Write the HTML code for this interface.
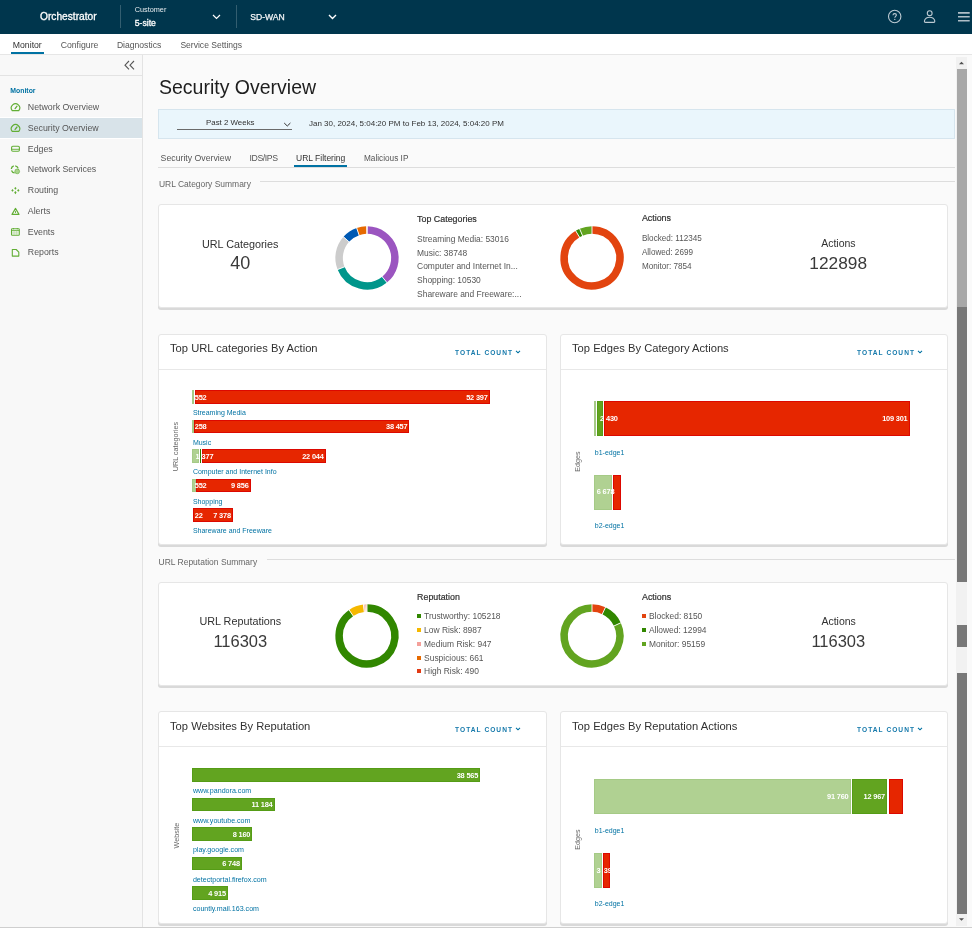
<!DOCTYPE html>
<html><head><meta charset="utf-8"><title>Security Overview</title>
<style>
html,body{margin:0;padding:0;}
body{width:972px;height:928px;position:relative;overflow:hidden;background:#fafafa;font-family:"Liberation Sans", sans-serif;}
.t{position:absolute;white-space:nowrap;}
.r{position:absolute;}
.s{position:absolute;overflow:visible;}
</style></head><body>
<div style="position:absolute;left:0;top:0;width:972px;height:928px;will-change:transform;background:#fafafa">

<div class="r" style="left:0px;top:0px;width:972px;height:34px;background:#00364d;"></div>
<div class="t" style="left:40.00px;top:11px;font-size:10.2px;line-height:11px;color:#ffffff;font-weight:normal;-webkit-text-stroke:0.3px #fff;">Orchestrator</div>
<div class="r" style="left:120px;top:5px;width:1px;height:23px;background:rgba(255,255,255,0.2);"></div>
<div class="t" style="left:134.70px;top:5px;font-size:7.3px;line-height:9px;color:#e6ecef;font-weight:normal;">Customer</div>
<div class="t" style="left:134.70px;top:18px;font-size:8.7px;line-height:10px;color:#ffffff;font-weight:normal;-webkit-text-stroke:0.3px #fff;">5-site</div>
<svg class="s" style="left:212px;top:14px;" width="9" height="6" viewBox="0 0 9 6"><polyline points="1,1 4.5,4.5 8,1" stroke="#fff" stroke-width="1.2" fill="none"/></svg>
<div class="r" style="left:236px;top:5px;width:1px;height:23px;background:rgba(255,255,255,0.2);"></div>
<div class="t" style="left:250.20px;top:12px;font-size:8.6px;line-height:10px;color:#f4f6f8;font-weight:normal;-webkit-text-stroke:0.25px #f4f6f8;">SD-WAN</div>
<svg class="s" style="left:327.5px;top:14px;" width="9" height="6" viewBox="0 0 9 6"><polyline points="1,1 4.5,4.5 8,1" stroke="#fff" stroke-width="1.4" fill="none"/></svg>
<svg class="s" style="left:886px;top:8.3px;" width="18" height="18" viewBox="0 0 18 18"><circle cx="8.7" cy="8.5" r="6.2" stroke="#bccad2" stroke-width="1.1" fill="none"/><path d="M7,7.3 C7,6.2 7.8,5.6 8.7,5.6 C9.7,5.6 10.4,6.3 10.4,7.1 C10.4,8.2 8.8,8.5 8.8,9.8" stroke="#bccad2" stroke-width="1.1" fill="none"/><circle cx="8.8" cy="11.4" r="0.65" fill="#bccad2"/></svg>
<svg class="s" style="left:920px;top:7px;" width="18" height="18" viewBox="0 0 18 18"><circle cx="9.7" cy="6.2" r="2.4" stroke="#bccad2" stroke-width="1.1" fill="none"/><path d="M5.6,15.4 C4.3,15.4 4.3,14.3 4.6,13.3 C5.4,11.2 7.3,10.3 9.6,10.3 C11.9,10.3 13.8,11.2 14.6,13.3 C14.9,14.3 14.9,15.4 13.6,15.4 Z" stroke="#bccad2" stroke-width="1.1" fill="none" stroke-linejoin="round"/></svg>
<svg class="s" style="left:957px;top:10px;" width="15" height="14" viewBox="0 0 15 14"><path d="M1,2.9 H12.7 M1,6.8 H12.7 M1,10.7 H12.7" stroke="#afbec7" stroke-width="1.6"/></svg>
<div class="r" style="left:0px;top:34px;width:972px;height:20px;background:#ffffff;"></div>
<div class="r" style="left:0px;top:54px;width:972px;height:1px;background:#e6e6e6;"></div>
<div class="t" style="left:12.80px;top:40px;font-size:8.7px;line-height:10px;color:#313131;font-weight:normal;">Monitor</div>
<div class="r" style="left:11px;top:52px;width:33px;height:2px;background:#0072a3;"></div>
<div class="t" style="left:60.70px;top:40px;font-size:8.7px;line-height:10px;color:#565656;font-weight:normal;">Configure</div>
<div class="t" style="left:116.90px;top:40px;font-size:8.6px;line-height:10px;color:#565656;font-weight:normal;">Diagnostics</div>
<div class="t" style="left:180.40px;top:40px;font-size:8.55px;line-height:10px;color:#565656;font-weight:normal;">Service Settings</div>
<div class="r" style="left:0px;top:55px;width:142px;height:873px;background:#f8f8f8;"></div>
<div class="r" style="left:142px;top:55px;width:1px;height:873px;background:#e3e3e3;"></div>
<div class="r" style="left:0px;top:75px;width:142px;height:1px;background:#e3e3e3;"></div>
<svg class="s" style="left:124px;top:60px;" width="12" height="11" viewBox="0 0 12 11"><polyline points="5,1 1,5.2 5,9.4" stroke="#565656" stroke-width="1.1" fill="none"/><polyline points="10,1 6,5.2 10,9.4" stroke="#565656" stroke-width="1.1" fill="none"/></svg>
<div class="t" style="left:10.30px;top:87px;font-size:6.9px;line-height:7px;color:#0072a3;font-weight:bold;">Monitor</div>
<div class="r" style="left:0px;top:117px;width:142px;height:1px;background:#ffffff;"></div>
<div class="r" style="left:0px;top:118px;width:142px;height:20px;background:#d8e3e9;"></div>
<div class="r" style="left:0px;top:138px;width:142px;height:1px;background:#ffffff;"></div>
<svg class="s" style="left:0;top:0" width="30" height="260" viewBox="0 0 30 260"><path d="M12.2,110.6 A4.2,4.2 0 1 1 18.8,110.6 Z" stroke="#62ae35" stroke-width="1.15" fill="none" stroke-linejoin="round"/><path d="M15.1,108.6 L17,106.2" stroke="#62ae35" stroke-width="1.3" stroke-linecap="round"/><path d="M12.2,131.4 A4.2,4.2 0 1 1 18.8,131.4 Z" stroke="#62ae35" stroke-width="1.15" fill="none" stroke-linejoin="round"/><path d="M15.1,129.4 L17,127" stroke="#62ae35" stroke-width="1.3" stroke-linecap="round"/><rect x="11.6" y="146.3" width="7.8" height="5" rx="1.2" stroke="#62ae35" stroke-width="1.1" fill="none"/><path d="M11.8,149.3 H19.2" stroke="#62ae35" stroke-width="0.9"/><circle cx="14.8" cy="169.3" r="3.5" stroke="#62ae35" stroke-width="1.3" fill="none" stroke-dasharray="4 1.5"/><circle cx="17.2" cy="171.4" r="2.4" fill="#a9d38c" stroke="#62ae35" stroke-width="0.6"/><path d="M15.4,186.9 L16.6,188.3 L15.4,189.7 L14.2,188.3 Z M12.5,189 L13.7,190.4 L12.5,191.8 L11.3,190.4 Z M18.3,189 L19.5,190.4 L18.3,191.8 L17.1,190.4 Z M15.4,191.1 L16.6,192.5 L15.4,194.2 L14.2,192.5 Z" fill="#62ae35"/><path d="M15.5,208.4 L19,214.4 H12 Z" stroke="#62ae35" stroke-width="1.1" fill="none" stroke-linejoin="round"/><path d="M15.5,210.8 V213" stroke="#62ae35" stroke-width="0.9"/><rect x="11.5" y="228.8" width="7.8" height="6.5" rx="0.8" stroke="#62ae35" stroke-width="1.05" fill="none"/><path d="M11.5,230.6 H19.3 M13.5,228 V229.3 M17.3,228 V229.3" stroke="#62ae35" stroke-width="0.9"/><path d="M12,232.3 H18.8 M12,233.8 H18.8 M14.1,230.8 V235 M16.6,230.8 V235" stroke="#b5d99c" stroke-width="0.6"/><path d="M12.3,249.5 H16.2 L18.8,252.1 V256.1 H12.3 Z" stroke="#62ae35" stroke-width="1.1" fill="none" stroke-linejoin="round"/></svg>
<div class="t" style="left:27.80px;top:102px;font-size:8.8px;line-height:10px;color:#565656;font-weight:normal;">Network Overview</div>
<div class="t" style="left:27.80px;top:123px;font-size:8.8px;line-height:10px;color:#565656;font-weight:normal;">Security Overview</div>
<div class="t" style="left:27.80px;top:144px;font-size:8.8px;line-height:10px;color:#565656;font-weight:normal;">Edges</div>
<div class="t" style="left:27.80px;top:164px;font-size:8.8px;line-height:10px;color:#565656;font-weight:normal;">Network Services</div>
<div class="t" style="left:27.80px;top:185px;font-size:8.8px;line-height:10px;color:#565656;font-weight:normal;">Routing</div>
<div class="t" style="left:27.80px;top:206px;font-size:8.8px;line-height:10px;color:#565656;font-weight:normal;">Alerts</div>
<div class="t" style="left:27.80px;top:227px;font-size:8.8px;line-height:10px;color:#565656;font-weight:normal;">Events</div>
<div class="t" style="left:27.80px;top:247px;font-size:8.8px;line-height:10px;color:#565656;font-weight:normal;">Reports</div>
<div class="t" style="left:159.00px;top:76px;font-size:19.5px;line-height:22px;color:#1e1e1e;font-weight:normal;">Security Overview</div>
<div class="r" style="left:158px;top:109px;width:795px;height:28px;background:#eaf6fc;border:1px solid #d6e5ee;"></div>
<div class="r" style="left:177px;top:129px;width:115px;height:1px;background:#6a6a6a;"></div>
<div class="t" style="left:206.00px;top:118px;font-size:7.9px;line-height:9px;color:#313131;font-weight:normal;">Past 2 Weeks</div>
<svg class="s" style="left:283px;top:122px;" width="9" height="6" viewBox="0 0 9 6"><polyline points="1.2,1 4.3,4 7.4,1" stroke="#313131" stroke-width="1" fill="none"/></svg>
<div class="t" style="left:309.00px;top:119px;font-size:7.99px;line-height:9px;color:#313131;font-weight:normal;">Jan 30, 2024, 5:04:20 PM to Feb 13, 2024, 5:04:20 PM</div>
<div class="t" style="left:160.60px;top:153px;font-size:8.74px;line-height:10px;color:#565656;font-weight:normal;">Security Overview</div>
<div class="t" style="left:249.50px;top:153px;font-size:8.7px;line-height:10px;color:#565656;font-weight:normal;letter-spacing:-0.4px;">IDS/IPS</div>
<div class="t" style="left:296.00px;top:153px;font-size:8.5px;line-height:10px;color:#313131;font-weight:normal;">URL Filtering</div>
<div class="t" style="left:364.00px;top:154px;font-size:8.24px;line-height:9px;color:#565656;font-weight:normal;">Malicious IP</div>
<div class="r" style="left:158px;top:167px;width:797px;height:1px;background:#dddddd;"></div>
<div class="r" style="left:294px;top:165px;width:53px;height:2px;background:#0072a3;"></div>
<div class="t" style="left:159.00px;top:179px;font-size:8.48px;line-height:10px;color:#666666;font-weight:normal;">URL Category Summary</div>
<div class="r" style="left:260px;top:181px;width:695px;height:1px;background:#dddddd;"></div>
<div class="r" style="left:158px;top:204px;width:788px;height:102px;background:#fff;border:1px solid #e6e6e6;border-radius:3px;box-shadow:0 2px 0 0 #d9d9d9;"></div>
<div class="t" style="left:-59.80px;width:600px;text-align:center;top:238px;font-size:10.8px;line-height:12px;color:#313131;font-weight:normal;">URL Categories</div>
<div class="t" style="left:-59.70px;width:600px;text-align:center;top:253px;font-size:18px;line-height:20px;color:#3a3a3a;font-weight:normal;">40</div>
<svg class="s" style="left:332.45px;top:222.7px;" width="70" height="70" viewBox="0 0 70 70"><path d="M35.243,7.101 A27.9,27.9 0 0 1 52.558,56.682" stroke="#9b55c0" stroke-width="7.5" fill="none"/><path d="M52.558,56.682 A27.9,27.9 0 0 1 9.041,45.225" stroke="#00968b" stroke-width="7.5" fill="none"/><path d="M9.041,45.225 A27.9,27.9 0 0 1 14.266,16.331" stroke="#cccccc" stroke-width="7.5" fill="none"/><path d="M14.266,16.331 A27.9,27.9 0 0 1 25.917,8.620" stroke="#0059b3" stroke-width="7.5" fill="none"/><path d="M25.917,8.620 A27.9,27.9 0 0 1 34.270,7.110" stroke="#e66a00" stroke-width="7.5" fill="none"/><line x1="35.202" y1="11.851" x2="35.285" y2="2.351" stroke="#fff" stroke-width="0.9"/><line x1="49.569" y1="52.991" x2="55.547" y2="60.374" stroke="#fff" stroke-width="0.9"/><line x1="13.461" y1="43.485" x2="4.622" y2="46.966" stroke="#fff" stroke-width="0.9"/><line x1="17.796" y1="19.510" x2="10.736" y2="13.153" stroke="#fff" stroke-width="0.9"/><line x1="27.463" y1="13.111" x2="24.370" y2="4.129" stroke="#fff" stroke-width="0.9"/></svg>
<div class="t" style="left:417.10px;top:214px;font-size:8.9px;line-height:10px;color:#313131;font-weight:normal;-webkit-text-stroke:0.2px #313131;">Top Categories</div>
<div class="t" style="left:417.10px;top:234px;font-size:8.44px;line-height:10px;color:#565656;font-weight:normal;">Streaming Media: 53016</div>
<div class="t" style="left:417.10px;top:248px;font-size:8.44px;line-height:10px;color:#565656;font-weight:normal;">Music: 38748</div>
<div class="t" style="left:417.10px;top:261px;font-size:8.44px;line-height:10px;color:#565656;font-weight:normal;">Computer and Internet In...</div>
<div class="t" style="left:417.10px;top:275px;font-size:8.44px;line-height:10px;color:#565656;font-weight:normal;">Shopping: 10530</div>
<div class="t" style="left:417.10px;top:289px;font-size:8.44px;line-height:10px;color:#565656;font-weight:normal;">Shareware and Freeware:...</div>
<svg class="s" style="left:557.3px;top:222.8px;" width="70" height="70" viewBox="0 0 70 70"><path d="M35.000,7.100 A27.9,27.9 0 1 1 20.630,11.085" stroke="#e2440f" stroke-width="7.5" fill="none"/><path d="M20.630,11.085 A27.9,27.9 0 0 1 24.099,9.318" stroke="#318700" stroke-width="7.5" fill="none"/><path d="M24.099,9.318 A27.9,27.9 0 0 1 35.000,7.100" stroke="#62a420" stroke-width="7.5" fill="none"/><line x1="35.000" y1="11.850" x2="35.000" y2="2.350" stroke="#fff" stroke-width="0.9"/><line x1="23.077" y1="15.157" x2="18.184" y2="7.013" stroke="#fff" stroke-width="0.9"/><line x1="25.955" y1="13.690" x2="22.243" y2="4.946" stroke="#fff" stroke-width="0.9"/></svg>
<div class="t" style="left:641.90px;top:213px;font-size:8.9px;line-height:10px;color:#313131;font-weight:normal;-webkit-text-stroke:0.2px #313131;">Actions</div>
<div class="t" style="left:641.90px;top:234px;font-size:8.14px;line-height:9px;color:#565656;font-weight:normal;">Blocked: 112345</div>
<div class="t" style="left:641.90px;top:248px;font-size:8.14px;line-height:9px;color:#565656;font-weight:normal;">Allowed: 2699</div>
<div class="t" style="left:641.90px;top:262px;font-size:8.14px;line-height:9px;color:#565656;font-weight:normal;">Monitor: 7854</div>
<div class="t" style="left:538.40px;width:600px;text-align:center;top:237px;font-size:10.5px;line-height:12px;color:#313131;font-weight:normal;">Actions</div>
<div class="t" style="left:538.20px;width:600px;text-align:center;top:253px;font-size:17.3px;line-height:20px;color:#3a3a3a;font-weight:normal;">122898</div>
<div class="t" style="left:158.60px;top:557px;font-size:8.48px;line-height:10px;color:#666666;font-weight:normal;">URL Reputation Summary</div>
<div class="r" style="left:267px;top:559px;width:688px;height:1px;background:#dddddd;"></div>
<div class="r" style="left:158px;top:582px;width:788px;height:102px;background:#fff;border:1px solid #e6e6e6;border-radius:3px;box-shadow:0 2px 0 0 #d9d9d9;"></div>
<div class="t" style="left:-59.70px;width:600px;text-align:center;top:615px;font-size:10.8px;line-height:12px;color:#313131;font-weight:normal;">URL Reputations</div>
<div class="t" style="left:-59.70px;width:600px;text-align:center;top:632px;font-size:16.5px;line-height:18px;color:#3a3a3a;font-weight:normal;">116303</div>
<svg class="s" style="left:332.2px;top:600.6px;" width="70" height="70" viewBox="0 0 70 70"><path d="M35.000,7.100 A27.9,27.9 0 1 1 19.197,12.007" stroke="#318700" stroke-width="7.5" fill="none"/><path d="M19.197,12.007 A27.9,27.9 0 0 1 31.842,7.279" stroke="#f5b800" stroke-width="7.5" fill="none"/><path d="M31.842,7.279 A27.9,27.9 0 0 1 33.248,7.155" stroke="#f4a09a" stroke-width="7.5" fill="none"/><path d="M33.248,7.155 A27.9,27.9 0 0 1 34.270,7.110" stroke="#e66a00" stroke-width="7.5" fill="none"/><path d="M34.270,7.110 A27.9,27.9 0 0 1 35.000,7.100" stroke="#e23a14" stroke-width="7.5" fill="none"/><line x1="35.000" y1="11.850" x2="35.000" y2="2.350" stroke="#fff" stroke-width="0.9"/><line x1="21.888" y1="15.921" x2="16.507" y2="8.092" stroke="#fff" stroke-width="0.9"/><line x1="32.379" y1="11.999" x2="31.304" y2="2.560" stroke="#fff" stroke-width="0.9"/><line x1="33.546" y1="11.896" x2="32.950" y2="2.414" stroke="#fff" stroke-width="0.9"/><line x1="34.394" y1="11.858" x2="34.145" y2="2.361" stroke="#fff" stroke-width="0.9"/></svg>
<div class="t" style="left:417.10px;top:592px;font-size:8.83px;line-height:10px;color:#313131;font-weight:normal;-webkit-text-stroke:0.2px #313131;">Reputation</div>
<div class="r" style="left:417px;top:614px;width:4px;height:4px;background:#318700;"></div>
<div class="t" style="left:424.10px;top:611px;font-size:8.44px;line-height:10px;color:#565656;font-weight:normal;">Trustworthy: 105218</div>
<div class="r" style="left:417px;top:628px;width:4px;height:4px;background:#f5b800;"></div>
<div class="t" style="left:424.10px;top:625px;font-size:8.44px;line-height:10px;color:#565656;font-weight:normal;">Low Risk: 8987</div>
<div class="r" style="left:417px;top:642px;width:4px;height:4px;background:#f4a09a;"></div>
<div class="t" style="left:424.10px;top:639px;font-size:8.44px;line-height:10px;color:#565656;font-weight:normal;">Medium Risk: 947</div>
<div class="r" style="left:417px;top:656px;width:4px;height:4px;background:#e66a00;"></div>
<div class="t" style="left:424.10px;top:653px;font-size:8.44px;line-height:10px;color:#565656;font-weight:normal;">Suspicious: 661</div>
<div class="r" style="left:417px;top:669px;width:4px;height:4px;background:#e23a14;"></div>
<div class="t" style="left:424.10px;top:666px;font-size:8.44px;line-height:10px;color:#565656;font-weight:normal;">High Risk: 490</div>
<svg class="s" style="left:557.45px;top:600.75px;" width="70" height="70" viewBox="0 0 70 70"><path d="M35.000,7.100 A27.9,27.9 0 0 1 46.879,9.755" stroke="#e2440f" stroke-width="7.5" fill="none"/><path d="M46.879,9.755 A27.9,27.9 0 0 1 60.368,23.386" stroke="#318700" stroke-width="7.5" fill="none"/><path d="M60.368,23.386 A27.9,27.9 0 1 1 35.000,7.100" stroke="#62a420" stroke-width="7.5" fill="none"/><line x1="35.000" y1="11.850" x2="35.000" y2="2.350" stroke="#fff" stroke-width="0.9"/><line x1="44.857" y1="14.053" x2="48.902" y2="5.457" stroke="#fff" stroke-width="0.9"/><line x1="56.049" y1="25.363" x2="64.687" y2="21.408" stroke="#fff" stroke-width="0.9"/></svg>
<div class="t" style="left:642.00px;top:592px;font-size:8.9px;line-height:10px;color:#313131;font-weight:normal;-webkit-text-stroke:0.2px #313131;">Actions</div>
<div class="r" style="left:642px;top:614px;width:4px;height:4px;background:#e2440f;"></div>
<div class="t" style="left:649.00px;top:611px;font-size:8.41px;line-height:10px;color:#565656;font-weight:normal;">Blocked: 8150</div>
<div class="r" style="left:642px;top:628px;width:4px;height:4px;background:#318700;"></div>
<div class="t" style="left:649.00px;top:625px;font-size:8.41px;line-height:10px;color:#565656;font-weight:normal;">Allowed: 12994</div>
<div class="r" style="left:642px;top:642px;width:4px;height:4px;background:#62a420;"></div>
<div class="t" style="left:649.00px;top:639px;font-size:8.41px;line-height:10px;color:#565656;font-weight:normal;">Monitor: 95159</div>
<div class="t" style="left:538.60px;width:600px;text-align:center;top:615px;font-size:10.5px;line-height:12px;color:#313131;font-weight:normal;">Actions</div>
<div class="t" style="left:538.30px;width:600px;text-align:center;top:632px;font-size:16.5px;line-height:18px;color:#3a3a3a;font-weight:normal;">116303</div>
<div class="r" style="left:158px;top:334px;width:387px;height:209px;background:#fff;border:1px solid #e6e6e6;border-radius:3px;box-shadow:0 2px 0 0 #d9d9d9;"></div>
<div class="r" style="left:159px;top:369px;width:387px;height:1px;background:#e8e8e8;"></div>
<div class="t" style="left:170.00px;top:342px;font-size:11.2px;line-height:12px;color:#313131;font-weight:normal;">Top URL categories By Action</div>
<div class="t" style="left:455.00px;top:349px;font-size:6.6px;line-height:7px;color:#1579ab;font-weight:bold;letter-spacing:1.05px;">TOTAL COUNT</div>
<svg class="s" style="left:514.5px;top:350.2px;" width="6" height="4" viewBox="0 0 6 4"><polyline points="1,0.8 3,2.8 5,0.8" stroke="#0072a3" stroke-width="1.1" fill="none"/></svg>
<div class="t" style="left:126px;top:443.2px;width:100px;text-align:center;font-size:7.2px;line-height:7.2px;color:#666666;transform:rotate(-90deg);">URL categories</div>
<div class="r" style="left:192.20px;top:390.30px;width:1.70px;height:13.6px;background:#b0d192;box-shadow:inset 0 0 0 1px #a5ca86;"></div>
<div class="r" style="left:194.90px;top:390.30px;width:294.70px;height:13.6px;background:#e62600;box-shadow:inset 0 0 0 1px #dc0800;"></div>
<div class="t" style="left:194.80px;top:393px;font-size:7.4px;line-height:9px;color:#ffffff;font-weight:bold;letter-spacing:-0.2px;">552</div>
<div class="t" style="right:484.40px;top:393px;font-size:7.4px;line-height:9px;color:#ffffff;font-weight:bold;letter-spacing:-0.2px;">52 397</div>
<div class="t" style="left:192.90px;top:409px;font-size:7px;line-height:7px;color:#0072a3;font-weight:normal;">Streaming Media</div>
<div class="r" style="left:192.20px;top:419.80px;width:1.40px;height:13.6px;background:#b0d192;box-shadow:inset 0 0 0 1px #a5ca86;"></div>
<div class="r" style="left:193.90px;top:419.80px;width:215.50px;height:13.6px;background:#e62600;box-shadow:inset 0 0 0 1px #dc0800;"></div>
<div class="t" style="left:194.80px;top:422px;font-size:7.4px;line-height:9px;color:#ffffff;font-weight:bold;letter-spacing:-0.2px;">258</div>
<div class="t" style="right:564.60px;top:422px;font-size:7.4px;line-height:9px;color:#ffffff;font-weight:bold;letter-spacing:-0.2px;">38 457</div>
<div class="t" style="left:192.90px;top:439px;font-size:7px;line-height:7px;color:#0072a3;font-weight:normal;">Music</div>
<div class="r" style="left:192.20px;top:449.20px;width:6.80px;height:13.6px;background:#b0d192;box-shadow:inset 0 0 0 1px #a5ca86;"></div>
<div class="r" style="left:199.70px;top:449.20px;width:1.60px;height:13.6px;background:#318700;box-shadow:inset 0 0 0 1px #2b7d00;"></div>
<div class="r" style="left:202.30px;top:449.20px;width:123.50px;height:13.6px;background:#e62600;box-shadow:inset 0 0 0 1px #dc0800;"></div>
<div class="t" style="left:195.60px;top:452px;font-size:7.4px;line-height:9px;color:#ffffff;font-weight:bold;letter-spacing:-0.2px;">1</div>
<div class="t" style="left:201.60px;top:452px;font-size:7.4px;line-height:9px;color:#ffffff;font-weight:bold;letter-spacing:-0.2px;">377</div>
<div class="t" style="right:648.40px;top:452px;font-size:7.4px;line-height:9px;color:#ffffff;font-weight:bold;letter-spacing:-0.2px;">22 044</div>
<div class="t" style="left:192.90px;top:468px;font-size:7px;line-height:7px;color:#0072a3;font-weight:normal;">Computer and Internet Info</div>
<div class="r" style="left:192.20px;top:478.90px;width:3.70px;height:13.6px;background:#b0d192;box-shadow:inset 0 0 0 1px #a5ca86;"></div>
<div class="r" style="left:196.00px;top:478.90px;width:54.70px;height:13.6px;background:#e62600;box-shadow:inset 0 0 0 1px #dc0800;"></div>
<div class="t" style="left:194.80px;top:481px;font-size:7.4px;line-height:9px;color:#ffffff;font-weight:bold;letter-spacing:-0.2px;">552</div>
<div class="t" style="right:723.40px;top:481px;font-size:7.4px;line-height:9px;color:#ffffff;font-weight:bold;letter-spacing:-0.2px;">9 856</div>
<div class="t" style="left:192.90px;top:498px;font-size:7px;line-height:7px;color:#0072a3;font-weight:normal;">Shopping</div>
<div class="r" style="left:192.60px;top:508.10px;width:40.40px;height:13.6px;background:#e62600;box-shadow:inset 0 0 0 1px #dc0800;"></div>
<div class="t" style="left:194.80px;top:511px;font-size:7.4px;line-height:9px;color:#ffffff;font-weight:bold;letter-spacing:-0.2px;">22</div>
<div class="t" style="right:741.20px;top:511px;font-size:7.4px;line-height:9px;color:#ffffff;font-weight:bold;letter-spacing:-0.2px;">7 378</div>
<div class="t" style="left:192.90px;top:527px;font-size:7px;line-height:7px;color:#0072a3;font-weight:normal;">Shareware and Freeware</div>
<div class="r" style="left:560px;top:334px;width:386px;height:209px;background:#fff;border:1px solid #e6e6e6;border-radius:3px;box-shadow:0 2px 0 0 #d9d9d9;"></div>
<div class="r" style="left:561px;top:369px;width:386px;height:1px;background:#e8e8e8;"></div>
<div class="t" style="left:572.00px;top:342px;font-size:11.2px;line-height:12px;color:#313131;font-weight:normal;">Top Edges By Category Actions</div>
<div class="t" style="left:857.00px;top:349px;font-size:6.6px;line-height:7px;color:#1579ab;font-weight:bold;letter-spacing:1.05px;">TOTAL COUNT</div>
<svg class="s" style="left:916.5px;top:350.2px;" width="6" height="4" viewBox="0 0 6 4"><polyline points="1,0.8 3,2.8 5,0.8" stroke="#0072a3" stroke-width="1.1" fill="none"/></svg>
<div class="t" style="left:528.2px;top:458.4px;width:100px;text-align:center;font-size:7.2px;line-height:7.2px;color:#666666;transform:rotate(-90deg);">Edges</div>
<div class="r" style="left:593.70px;top:401.3px;width:2.20px;height:34.7px;background:#b0d192;box-shadow:inset 0 0 0 1px #a5ca86;"></div>
<div class="r" style="left:597.10px;top:401.3px;width:6.30px;height:34.7px;background:#62a420;box-shadow:inset 0 0 0 1px #559c16;"></div>
<div class="r" style="left:604.10px;top:401.3px;width:306.40px;height:34.7px;background:#e62600;box-shadow:inset 0 0 0 1px #dc0800;"></div>
<div class="t" style="left:600.00px;top:414px;font-size:7.4px;line-height:9px;color:#ffffff;font-weight:bold;letter-spacing:-0.2px;">2</div>
<div class="t" style="left:606.00px;top:414px;font-size:7.4px;line-height:9px;color:#ffffff;font-weight:bold;letter-spacing:-0.2px;">430</div>
<div class="t" style="right:64.50px;top:414px;font-size:7.4px;line-height:9px;color:#ffffff;font-weight:bold;letter-spacing:-0.2px;">109 301</div>
<div class="t" style="left:594.80px;top:449px;font-size:7px;line-height:7px;color:#0072a3;font-weight:normal;">b1-edge1</div>
<div class="r" style="left:593.70px;top:475.2px;width:18.40px;height:34.7px;background:#b0d192;box-shadow:inset 0 0 0 1px #a5ca86;"></div>
<div class="r" style="left:613.30px;top:475.2px;width:7.90px;height:34.7px;background:#e62600;box-shadow:inset 0 0 0 1px #dc0800;"></div>
<div class="t" style="left:596.80px;top:487px;font-size:7.4px;line-height:9px;color:#ffffff;font-weight:bold;letter-spacing:-0.2px;">6 678</div>
<div class="t" style="left:594.80px;top:522px;font-size:7px;line-height:7px;color:#0072a3;font-weight:normal;">b2-edge1</div>
<div class="r" style="left:158px;top:711px;width:387px;height:211px;background:#fff;border:1px solid #e6e6e6;border-radius:3px;box-shadow:0 2px 0 0 #d9d9d9;"></div>
<div class="r" style="left:159px;top:746px;width:387px;height:1px;background:#e8e8e8;"></div>
<div class="t" style="left:170.00px;top:720px;font-size:11.2px;line-height:12px;color:#313131;font-weight:normal;">Top Websites By Reputation</div>
<div class="t" style="left:455.00px;top:726px;font-size:6.6px;line-height:7px;color:#1579ab;font-weight:bold;letter-spacing:1.05px;">TOTAL COUNT</div>
<svg class="s" style="left:514.5px;top:727.2px;" width="6" height="4" viewBox="0 0 6 4"><polyline points="1,0.8 3,2.8 5,0.8" stroke="#0072a3" stroke-width="1.1" fill="none"/></svg>
<div class="t" style="left:127px;top:832.4px;width:100px;text-align:center;font-size:7.2px;line-height:7.2px;color:#666666;transform:rotate(-90deg);">Website</div>
<div class="r" style="left:192.3px;top:768.30px;width:288.10px;height:13.6px;background:#62a420;box-shadow:inset 0 0 0 1px #559c16;"></div>
<div class="t" style="right:493.90px;top:771px;font-size:7.4px;line-height:9px;color:#ffffff;font-weight:bold;letter-spacing:-0.2px;">38 565</div>
<div class="t" style="left:192.90px;top:787px;font-size:7.1px;line-height:8px;color:#0072a3;font-weight:normal;">www.pandora.com</div>
<div class="r" style="left:192.3px;top:797.80px;width:82.50px;height:13.6px;background:#62a420;box-shadow:inset 0 0 0 1px #559c16;"></div>
<div class="t" style="right:699.50px;top:800px;font-size:7.4px;line-height:9px;color:#ffffff;font-weight:bold;letter-spacing:-0.2px;">11 184</div>
<div class="t" style="left:192.90px;top:817px;font-size:7.1px;line-height:8px;color:#0072a3;font-weight:normal;">www.youtube.com</div>
<div class="r" style="left:192.3px;top:827.30px;width:60.20px;height:13.6px;background:#62a420;box-shadow:inset 0 0 0 1px #559c16;"></div>
<div class="t" style="right:721.80px;top:830px;font-size:7.4px;line-height:9px;color:#ffffff;font-weight:bold;letter-spacing:-0.2px;">8 160</div>
<div class="t" style="left:192.90px;top:846px;font-size:7.1px;line-height:8px;color:#0072a3;font-weight:normal;">play.google.com</div>
<div class="r" style="left:192.3px;top:856.80px;width:49.80px;height:13.6px;background:#62a420;box-shadow:inset 0 0 0 1px #559c16;"></div>
<div class="t" style="right:732.20px;top:859px;font-size:7.4px;line-height:9px;color:#ffffff;font-weight:bold;letter-spacing:-0.2px;">6 748</div>
<div class="t" style="left:192.90px;top:876px;font-size:7.1px;line-height:8px;color:#0072a3;font-weight:normal;">detectportal.firefox.com</div>
<div class="r" style="left:192.3px;top:886.20px;width:35.80px;height:13.6px;background:#62a420;box-shadow:inset 0 0 0 1px #559c16;"></div>
<div class="t" style="right:746.20px;top:889px;font-size:7.4px;line-height:9px;color:#ffffff;font-weight:bold;letter-spacing:-0.2px;">4 915</div>
<div class="t" style="left:192.90px;top:905px;font-size:7.1px;line-height:8px;color:#0072a3;font-weight:normal;">countly.mail.163.com</div>
<div class="r" style="left:560px;top:711px;width:386px;height:211px;background:#fff;border:1px solid #e6e6e6;border-radius:3px;box-shadow:0 2px 0 0 #d9d9d9;"></div>
<div class="r" style="left:561px;top:746px;width:386px;height:1px;background:#e8e8e8;"></div>
<div class="t" style="left:572.00px;top:720px;font-size:11.2px;line-height:12px;color:#313131;font-weight:normal;">Top Edges By Reputation Actions</div>
<div class="t" style="left:857.00px;top:726px;font-size:6.6px;line-height:7px;color:#1579ab;font-weight:bold;letter-spacing:1.05px;">TOTAL COUNT</div>
<svg class="s" style="left:916.5px;top:727.2px;" width="6" height="4" viewBox="0 0 6 4"><polyline points="1,0.8 3,2.8 5,0.8" stroke="#0072a3" stroke-width="1.1" fill="none"/></svg>
<div class="t" style="left:527.8px;top:835.9px;width:100px;text-align:center;font-size:7.2px;line-height:7.2px;color:#666666;transform:rotate(-90deg);">Edges</div>
<div class="r" style="left:593.80px;top:779.3px;width:257.20px;height:34.9px;background:#b0d192;box-shadow:inset 0 0 0 1px #a5ca86;"></div>
<div class="r" style="left:851.90px;top:779.3px;width:35.40px;height:34.9px;background:#62a420;box-shadow:inset 0 0 0 1px #559c16;"></div>
<div class="r" style="left:888.80px;top:779.3px;width:14.20px;height:34.9px;background:#e62600;box-shadow:inset 0 0 0 1px #dc0800;"></div>
<div class="t" style="right:123.50px;top:792px;font-size:7.4px;line-height:9px;color:#ffffff;font-weight:bold;letter-spacing:-0.2px;">91 760</div>
<div class="t" style="right:87.00px;top:792px;font-size:7.4px;line-height:9px;color:#ffffff;font-weight:bold;letter-spacing:-0.2px;">12 967</div>
<div class="t" style="left:594.80px;top:827px;font-size:7px;line-height:7px;color:#0072a3;font-weight:normal;">b1-edge1</div>
<div class="r" style="left:593.80px;top:853px;width:8.40px;height:35px;background:#b0d192;box-shadow:inset 0 0 0 1px #a5ca86;"></div>
<div class="r" style="left:603.40px;top:853px;width:7.10px;height:35px;background:#e62600;box-shadow:inset 0 0 0 1px #dc0800;"></div>
<div class="t" style="left:596.50px;top:866px;font-size:7.4px;line-height:9px;color:#ffffff;font-weight:bold;letter-spacing:-0.2px;">3</div>
<div class="t" style="left:603.80px;top:866px;font-size:7.4px;line-height:9px;color:#ffffff;font-weight:bold;letter-spacing:-0.2px;">39</div>
<div class="t" style="left:594.80px;top:900px;font-size:7px;line-height:7px;color:#0072a3;font-weight:normal;">b2-edge1</div>
<div class="r" style="left:0px;top:927px;width:972px;height:1px;background:#cfcfcf;"></div>
<div class="r" style="left:956px;top:57px;width:11px;height:869px;background:#f1f1f1;"></div>
<svg class="s" style="left:956px;top:58px;" width="11" height="10" viewBox="0 0 11 10"><polygon points="3,6.3 5.5,3.8 8,6.3" fill="#505050"/></svg>
<div class="r" style="left:957px;top:69px;width:10px;height:238px;background:#a8a8a8;"></div>
<div class="r" style="left:957px;top:307px;width:10px;height:275px;background:#787878;"></div>
<div class="r" style="left:957px;top:625px;width:10px;height:22px;background:#787878;"></div>
<div class="r" style="left:957px;top:673px;width:10px;height:241px;background:#787878;"></div>
<svg class="s" style="left:956px;top:915px;" width="11" height="10" viewBox="0 0 11 10"><polygon points="3,3.2 5.5,5.7 8,3.2" fill="#505050"/></svg>
</div></body></html>
